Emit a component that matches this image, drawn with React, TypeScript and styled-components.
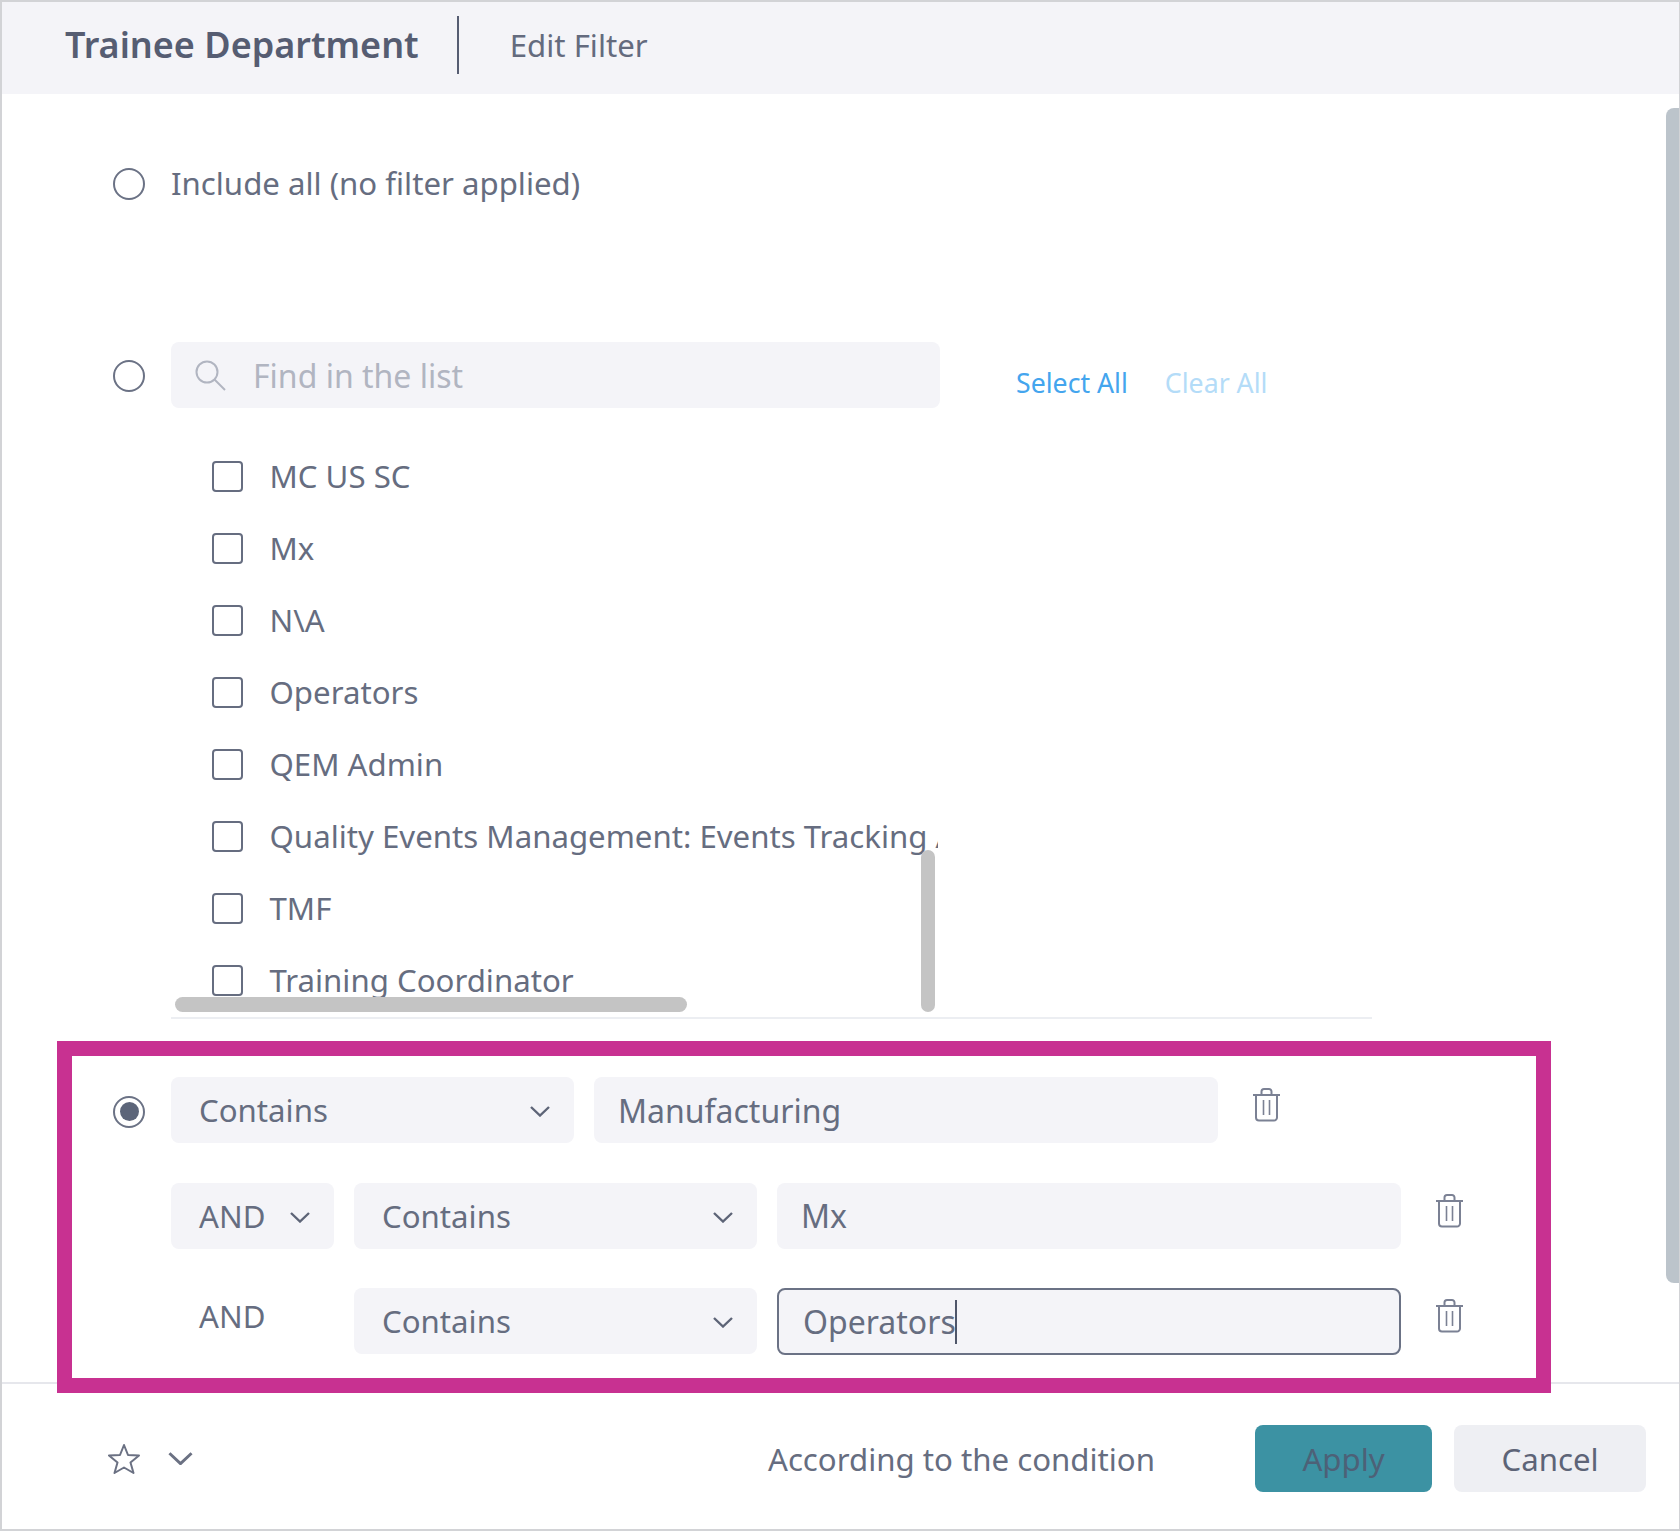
import React from 'react';
import styled, {createGlobalStyle} from 'styled-components';

const GlobalStyle = createGlobalStyle`
  html, body {
    margin: 0;
    padding: 0;
    background: #ffffff;
  }

  body {
    font-family: "Noto Sans", "Open Sans", sans-serif;
    color: #5d6477;
  }
`

const Frame = styled.div`
  box-sizing: border-box;
  width: 1680px;
  height: 1531px;
  border: 2px solid #d2d3d6;
  border-right-width: 1px;
  display: flex;
  flex-direction: column;
  overflow: hidden;
`

const Header = styled.header`
  flex: none;
  box-sizing: border-box;
  height: 92px;
  background: #f4f4f8;
  display: flex;
  align-items: center;
  padding: 0 0 7px 63px;
`

const Title = styled.h1`
  margin: 0;
  font-size: 36px;
  font-weight: 600;
  color: #565d72;
  line-height: 1;
`

const HeaderDivider = styled.div`
  width: 2px;
  height: 58px;
  margin: 0 51px 0 38px;
  background: #565d72;
`

const HeaderLink = styled.span`
  font-size: 31.2px;
  color: #646b7e;
`

const Main = styled.main`
  position: relative;
  flex: 1;
  min-height: 0;
  padding: 70px 0 0 54px;
`

const PageScrollbar = styled.div`
  position: absolute;
  top: 14px;
  right: 0;
  width: 13px;
  height: 1175px;
  background: #bcc4cb;
  border-radius: 8px 0 0 8px;
`

const OptionRow = styled.div<{ $top?: number }>`
  display: flex;
  align-items: center;
  gap: 26px;
  padding-left: 57px;
  margin-top: ${p => p.$top || 0}px;
`

const Radio = styled.span<{ $checked?: boolean }>`
  box-sizing: border-box;
  flex: none;
  width: 32px;
  height: 32px;
  border: 2.5px solid #6b7285;
  border-radius: 50%;
  background: #ffffff;
  display: flex;
  align-items: center;
  justify-content: center;

  &::after {
    content: "";
    display: ${p => (p.$checked ? 'block' : 'none')};
    width: 19px;
    height: 19px;
    border-radius: 50%;
    background: #5c6579;
  }
`

const SearchRadio = styled(Radio)`
  margin-top: 2px;
`

const OptionLabel = styled.span`
  font-size: 31.2px;
  line-height: 38px;
  padding-bottom: 2px;
  color: #666d80;
`

const SearchBox = styled.div`
  width: 769px;
  height: 66px;
  box-sizing: border-box;
  padding-left: 24px;
  background: #f4f4f8;
  border-radius: 8px;
  display: flex;
  align-items: center;
  gap: 27px;
  font-size: 32px;
  color: #b1b5c1;
`

const Links = styled.div`
  display: flex;
  gap: 37px;
  margin: 14px 0 0 50px;
  font-size: 26.7px;
`

const TextLink = styled.a<{ $disabled?: boolean }>`
  color: ${p => (p.$disabled ? '#b4dcf8' : '#44a5ee')};
  text-decoration: none;
`

const ListArea = styled.div`
  position: relative;
  box-sizing: content-box;
  width: 1201px;
  height: 577px;
  margin: 32px 0 0 115px;
  border-bottom: 2px solid #eceef2;
`

const ListViewport = styled.div`
  width: 767px;
  height: 100%;
  overflow: hidden;
`

const ListRow = styled.label`
  height: 72px;
  padding-left: 41px;
  display: flex;
  align-items: center;
  gap: 26.5px;
  font-size: 31.2px;
  color: #666d80;
  white-space: nowrap;
`

const Checkbox = styled.span`
  box-sizing: border-box;
  flex: none;
  width: 31px;
  height: 31px;
  border: 2.5px solid #666d80;
  border-radius: 4px;
`

const HScroll = styled.div`
  position: absolute;
  left: 4px;
  bottom: 5px;
  width: 512px;
  height: 15px;
  border-radius: 8px;
  background: #c4c4c4;
`

const VScroll = styled.div`
  position: absolute;
  left: 750px;
  bottom: 5px;
  width: 14px;
  height: 162px;
  border-radius: 7px;
  background: #c4c4c4;
`

const ConditionBox = styled.section`
  position: relative;
  z-index: 1;
  box-sizing: border-box;
  width: 1494px;
  height: 352px;
  margin: 22px 0 0 1px;
  padding: 21px 0 0 41px;
  border: 15px solid #c83191;
  background: #ffffff;
  display: flex;
  flex-direction: column;
  gap: 39.5px;
`

const ConditionRow = styled.div`
  display: flex;
  align-items: center;
  height: 66px;
`

const RadioSlot = styled.div`
  flex: none;
  width: 58px;
  padding-top: 3px;
`

const Select = styled.div<{ $width: number }>`
  box-sizing: border-box;
  flex: none;
  width: ${p => p.$width}px;
  height: 66px;
  margin-right: 20px;
  padding: 0 24px 0 28px;
  background: #f4f4f8;
  border-radius: 8px;
  display: flex;
  align-items: center;
  justify-content: space-between;
  font-size: 31.2px;
  color: #666d80;

  svg {
    margin-top: 3px;
  }
`

const PlainOperator = styled.div`
  flex: none;
  width: 163px;
  margin: 0 20px 10px 0;
  padding-left: 28px;
  box-sizing: border-box;
  font-size: 31.2px;
  color: #666d80;
`

const Field = styled.div<{ $width: number; $focused?: boolean }>`
  box-sizing: border-box;
  flex: none;
  width: ${p => p.$width}px;
  height: ${p => (p.$focused ? 67 : 66)}px;
  margin-top: ${p => (p.$focused ? 1 : 0)}px;
  padding-left: 24px;
  background: #f4f4f8;
  border: ${p => (p.$focused ? '2.5px solid #6b7285' : 'none')};
  border-radius: 8px;
  display: flex;
  align-items: center;
  font-size: 32px;
  color: #666d80;
`

const Caret = styled.span`
  width: 2px;
  height: 44px;
  background: #4f566a;
  margin-left: -1px;
`

const TrashButton = styled.button<{ $left: number }>`
  flex: none;
  display: block;
  margin: 0 0 10px ${p => p.$left}px;
  padding: 0;
  border: none;
  background: none;
  line-height: 0;
`

const Footer = styled.footer`
  flex: none;
  height: 146px;
  margin: -11px 0 0 -54px;
  border-top: 2px solid #e6e7ec;
  box-sizing: border-box;
  display: flex;
  align-items: center;
  padding: 5px 33px 0 106px;
`

const StarWrap = styled.div`
  display: flex;
  align-items: center;
  gap: 28px;
`

const FooterNote = styled.span`
  margin: 1px 0 0 auto;
  font-size: 31.2px;
  color: #666d80;
`

const Button = styled.button<{ $primary?: boolean }>`
  box-sizing: border-box;
  height: 67px;
  width: ${p => (p.$primary ? 177 : 192)}px;
  margin-left: ${p => (p.$primary ? 100 : 22)}px;
  padding: 1px 0 0;
  border: none;
  border-radius: 8px;
  background: ${p => (p.$primary ? '#3c92a3' : '#eeeff3')};
  font-family: inherit;
  font-size: 31.2px;
  color: ${p => (p.$primary ? '#4d6177' : '#5d6477')};
`

const SearchIcon = () => (
    <svg width="31" height="31" viewBox="0 0 31 31" fill="none" stroke="#b1b5c1" strokeWidth="2">
        <circle cx="12" cy="12" r="10.5"/>
        <path d="M19.5 19.5 L30 30"/>
    </svg>
)

const Chevron = ({size = 20, color = '#5d6477'}: { size?: number; color?: string }) => (
    <svg width={size} height={size / 2 + 1} viewBox="0 0 20 11" fill="none" stroke={color} strokeWidth="2.4">
        <path d="M1 1 L10 9.5 L19 1"/>
    </svg>
)

const TrashIcon = () => (
    <svg width="29" height="34" viewBox="0 0 29 34" fill="none" stroke="#7b8194" strokeWidth="2">
        <path d="M1 7 H28"/>
        <path d="M9.5 7 V3.5 a2.5 2.5 0 0 1 2.5 -2.5 h5 a2.5 2.5 0 0 1 2.5 2.5 V7"/>
        <path d="M4 7 V29.5 a3 3 0 0 0 3 3 h15 a3 3 0 0 0 3 -3 V7"/>
        <path d="M11.5 12 V27 M17.5 12 V27" strokeWidth="1.6"/>
    </svg>
)

const StarIcon = () => (
    <svg width="32" height="32" viewBox="0 0 32 32" fill="none" stroke="#6b7183" strokeWidth="2" strokeLinejoin="round">
        <polygon points="16,2 20,12 31,12.5 22.5,19.5 25.5,30 16,24.5 6.5,30 9.5,19.5 1,12.5 12,12"/>
    </svg>
)

const departments = [
    'MC US SC',
    'Mx',
    'N\\A',
    'Operators',
    'QEM Admin',
    'Quality Events Management: Events Tracking Admin',
    'TMF',
    'Training Coordinator',
]

const App = () => {
    return (
        <Frame>
            <GlobalStyle/>
            <Header>
                <Title>Trainee Department</Title>
                <HeaderDivider/>
                <HeaderLink>Edit Filter</HeaderLink>
            </Header>
            <Main>
                <PageScrollbar/>
                <OptionRow>
                    <Radio/>
                    <OptionLabel>Include all (no filter applied)</OptionLabel>
                </OptionRow>
                <OptionRow $top={138}>
                    <SearchRadio/>
                    <SearchBox>
                        <SearchIcon/>
                        Find in the list
                    </SearchBox>
                    <Links>
                        <TextLink>Select All</TextLink>
                        <TextLink $disabled>Clear All</TextLink>
                    </Links>
                </OptionRow>
                <ListArea>
                    <ListViewport>
                        {departments.map(name => (
                            <ListRow key={name}>
                                <Checkbox/>
                                {name}
                            </ListRow>
                        ))}
                    </ListViewport>
                    <HScroll/>
                    <VScroll/>
                </ListArea>
                <ConditionBox>
                    <ConditionRow>
                        <RadioSlot><Radio $checked/></RadioSlot>
                        <Select $width={403}>Contains<Chevron/></Select>
                        <Field $width={624}>Manufacturing</Field>
                        <TrashButton $left={34}><TrashIcon/></TrashButton>
                    </ConditionRow>
                    <ConditionRow>
                        <RadioSlot/>
                        <Select $width={163}>AND<Chevron/></Select>
                        <Select $width={403}>Contains<Chevron/></Select>
                        <Field $width={624}>Mx</Field>
                        <TrashButton $left={34}><TrashIcon/></TrashButton>
                    </ConditionRow>
                    <ConditionRow>
                        <RadioSlot/>
                        <PlainOperator>AND</PlainOperator>
                        <Select $width={403}>Contains<Chevron/></Select>
                        <Field $width={624} $focused>Operators<Caret/></Field>
                        <TrashButton $left={34}><TrashIcon/></TrashButton>
                    </ConditionRow>
                </ConditionBox>
                <Footer>
                    <StarWrap>
                        <StarIcon/>
                        <Chevron size={25} color="#6b7183"/>
                    </StarWrap>
                    <FooterNote>According to the condition</FooterNote>
                    <Button $primary>Apply</Button>
                    <Button>Cancel</Button>
                </Footer>
            </Main>
        </Frame>
    );
};

export default App;
